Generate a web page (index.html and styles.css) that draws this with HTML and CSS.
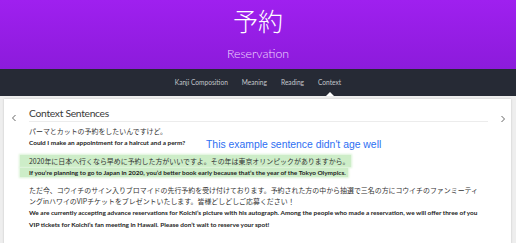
FILE: index.html
```html
<!DOCTYPE html>
<html lang="ja">
<head>
<meta charset="utf-8">
<title>予約 - Reservation</title>
<link rel="stylesheet" href="styles.css">
</head>
<body>
<header class="hero">
  <div class="hero-kanji">予約</div>
  <div class="hero-meaning">Reservation</div>
</header>
<nav class="tabs">
  <a class="tab">Kanji Composition</a>
  <a class="tab">Meaning</a>
  <a class="tab">Reading</a>
  <a class="tab tab-active">Context</a>
</nav>
<main class="page">
  <section class="card">
    <div class="arrow-col">
      <svg class="chev" width="6" height="8" viewBox="0 0 6 8"><path d="M4.5 1 L1.5 4 L4.5 7" fill="none" stroke="#666" stroke-width="1"/></svg>
    </div>
    <div class="content">
      <h2 class="section-title">Context Sentences</h2>
      <div class="sentence">
        <p class="jp">パーマとカットの予約をしたいんですけど。</p>
        <p class="en">Could I make an appointment for a haircut and a perm?</p>
      </div>
      <div class="sentence">
        <p class="jp"><span class="mark">2020年に日本へ行くなら早めに予約した方がいいですよ。その年は東京オリンピックがありますから。</span></p>
        <p class="en"><span class="mark">If you’re planning to go to Japan in 2020, you’d better book early because that’s the year of the Tokyo Olympics.</span></p>
      </div>
      <div class="sentence">
        <p class="jp jp-wrap">ただ今、コウイチのサイン入りブロマイドの先行予約を受け付けております。予約された方の中から抽選で三名の方にコウイチのファンミーティングinハワイのVIPチケットをプレゼントいたします。皆様どしどしご応募ください！</p>
        <p class="en">We are currently accepting advance reservations for Koichi’s picture with his autograph. Among the people who made a reservation, we will offer three of you VIP tickets for Koichi’s fan meeting in Hawaii. Please don’t wait to reserve your spot!</p>
      </div>
      <div class="note">This example sentence didn't age well</div>
    </div>
    <div class="arrow-col arrow-right">
      <svg class="chev" width="6" height="8" viewBox="0 0 6 8"><path d="M1.5 1 L4.5 4 L1.5 7" fill="none" stroke="#666" stroke-width="1"/></svg>
    </div>
  </section>
</main>
</body>
</html>
```

FILE: styles.css
```css
html, body {
  margin: 0;
  padding: 0;
}
body {
  width: 516px;
  height: 243px;
  overflow: hidden;
  background: #eeeeee;
  font-family: "Noto Sans CJK JP", sans-serif;
}
.hero {
  height: 69px;
  background: linear-gradient(#9f20ef, #8c1bdb);
  color: #fff;
  text-align: center;
  display: flex;
  flex-direction: column;
  align-items: center;
}
.hero-kanji {
  font-family: "Noto Sans CJK JP", sans-serif;
  font-weight: 300;
  font-size: 25px;
  line-height: 26px;
  margin-top: 7px;
}
.hero-meaning {
  font-family: Lato, sans-serif;
  font-weight: 300;
  font-size: 12.3px;
  line-height: 14px;
  margin-top: 14px;
  color: #f1dcff;
}
.tabs {
  height: 27px;
  background: #262a35;
  display: flex;
  justify-content: center;
  align-items: center;
  gap: 14px;
}
.tab {
  font-family: Lato, sans-serif;
  font-size: 6.6px;
  color: #c3c6cb;
  position: relative;
  line-height: 27px;
}
.tab-active::after {
  content: "";
  position: absolute;
  left: 50%;
  bottom: 0;
  margin-left: -4px;
  border-left: 4px solid transparent;
  border-right: 4px solid transparent;
  border-bottom: 4px solid #fff;
}
.page {
  padding: 3px 5px 0 4px;
}
.card {
  background: #fff;
  box-shadow: 0 0 2px rgba(0,0,0,0.18);
  display: grid;
  grid-template-columns: 25px 1fr 23px;
  height: 150px;
}
.arrow-col {
  padding-top: 15px;
  padding-left: 7px;
}
.arrow-right {
  padding-left: 12px;
  padding-top: 16px;
}
.chev {
  display: block;
}
.content {
  position: relative;
  padding-top: 7px;
}
.section-title {
  margin: 0;
  font-family: Lato, sans-serif;
  font-weight: 400;
  font-size: 10.3px;
  letter-spacing: -0.3px;
  line-height: 15px;
  color: #3a3a3a;
  border-bottom: 1px solid #ececec;
}
.sentence {
  margin-top: 7px;
}
.sentence:first-of-type {
  margin-top: 4px;
}
.jp {
  margin: 0;
  font-family: "Noto Sans CJK JP", sans-serif;
  font-size: 6.95px;
  line-height: 11px;
  color: #333;
}
.jp-wrap {
  max-width: 454px;
}
.en {
  margin: 0;
  font-family: Lato, sans-serif;
  font-weight: 700;
  font-size: 6.45px;
  line-height: 11.5px;
  color: #222;
}
.mark {
  background: #cdedc8;
  box-shadow: 0 0 2px 1px #daf2d6;
  padding: 1px 2px 1px 9px;
  margin-left: -9px;
}
.note {
  position: absolute;
  left: 177px;
  top: 40px;
  font-family: "Liberation Sans", Arial, sans-serif;
  font-size: 10.4px;
  color: #2e6ff2;
}
```
